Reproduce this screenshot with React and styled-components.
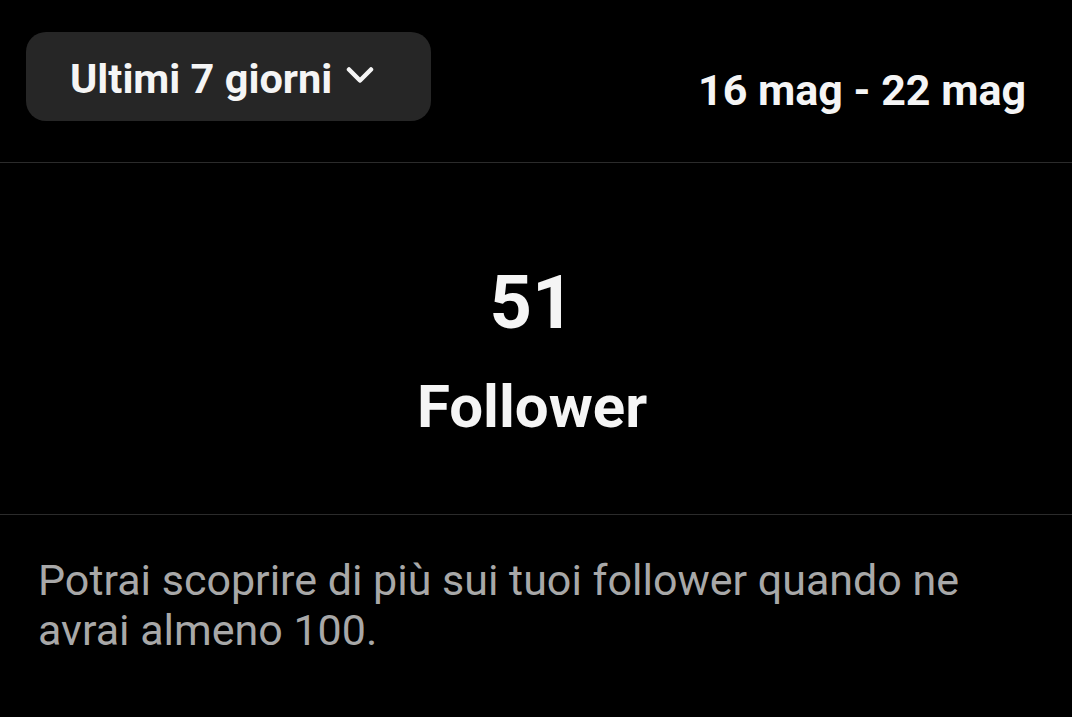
import React from "react";
import styled, { createGlobalStyle } from "styled-components";

const Global = createGlobalStyle`
  html, body { margin: 0; padding: 0; background: #000; }
  body { font-family: Roboto, "Noto Sans", Arial, sans-serif; color: #f5f5f5; }
  * { box-sizing: border-box; }
`;

const Page = styled.div`
  width: 1072px;
  height: 717px;
  background: #000;
  display: flex;
  flex-direction: column;
  overflow: hidden;
`;

const Header = styled.header`
  height: 163px;
  display: flex;
  justify-content: space-between;
  align-items: flex-start;
  padding: 32px 46px 0 26px;
  border-bottom: 1px solid #2b2b2b;
`;

const RangeButton = styled.button`
  height: 89px;
  display: flex;
  align-items: center;
  gap: 14px;
  padding: 4px 57px 0 44px;
  border: none;
  border-radius: 20px;
  background: #262626;
  color: #f5f5f5;
  font-family: Roboto, Arial, sans-serif;
  font-weight: 700;
  font-size: 41.5px;
  line-height: 1;
  cursor: pointer;
`;

const Chevron = styled.svg`
  width: 28px;
  height: 19px;
  margin-top: -7px;
  flex: none;
`;

const DateRange = styled.div`
  font-weight: 700;
  font-size: 43px;
  line-height: 1;
  margin-top: 37px;
  color: #f5f5f5;
`;

const Summary = styled.section`
  height: 352px;
  display: flex;
  flex-direction: column;
  align-items: center;
  padding: 103px 8px 0 0;
  gap: 37px;
  border-bottom: 1px solid #2b2b2b;
`;

const Count = styled.div`
  font-weight: 700;
  font-size: 74px;
  line-height: 1;
  color: #f5f5f5;
`;

const Label = styled.div`
  font-weight: 700;
  font-size: 60px;
  line-height: 1;
  color: #f5f5f5;
`;

const Note = styled.p`
  margin: 0;
  padding: 40px 38px 0 38px;
  font-size: 43px;
  line-height: 50px;
  font-weight: 400;
  color: #a8a8a8;
`;

export default function App() {
  return (
    <>
      <Global />
      <Page>
        <Header>
          <RangeButton>
            Ultimi 7 giorni
            <Chevron viewBox="0 0 28 19">
              <polyline
                points="3,3.5 14,14.5 25,3.5"
                fill="none"
                stroke="#f5f5f5"
                strokeWidth="4.5"
                strokeLinecap="round"
                strokeLinejoin="round"
              />
            </Chevron>
          </RangeButton>
          <DateRange>16 mag - 22 mag</DateRange>
        </Header>
        <Summary>
          <Count>51</Count>
          <Label>Follower</Label>
        </Summary>
        <Note>
          Potrai scoprire di più sui tuoi follower quando ne avrai almeno 100.
        </Note>
      </Page>
    </>
  );
}
